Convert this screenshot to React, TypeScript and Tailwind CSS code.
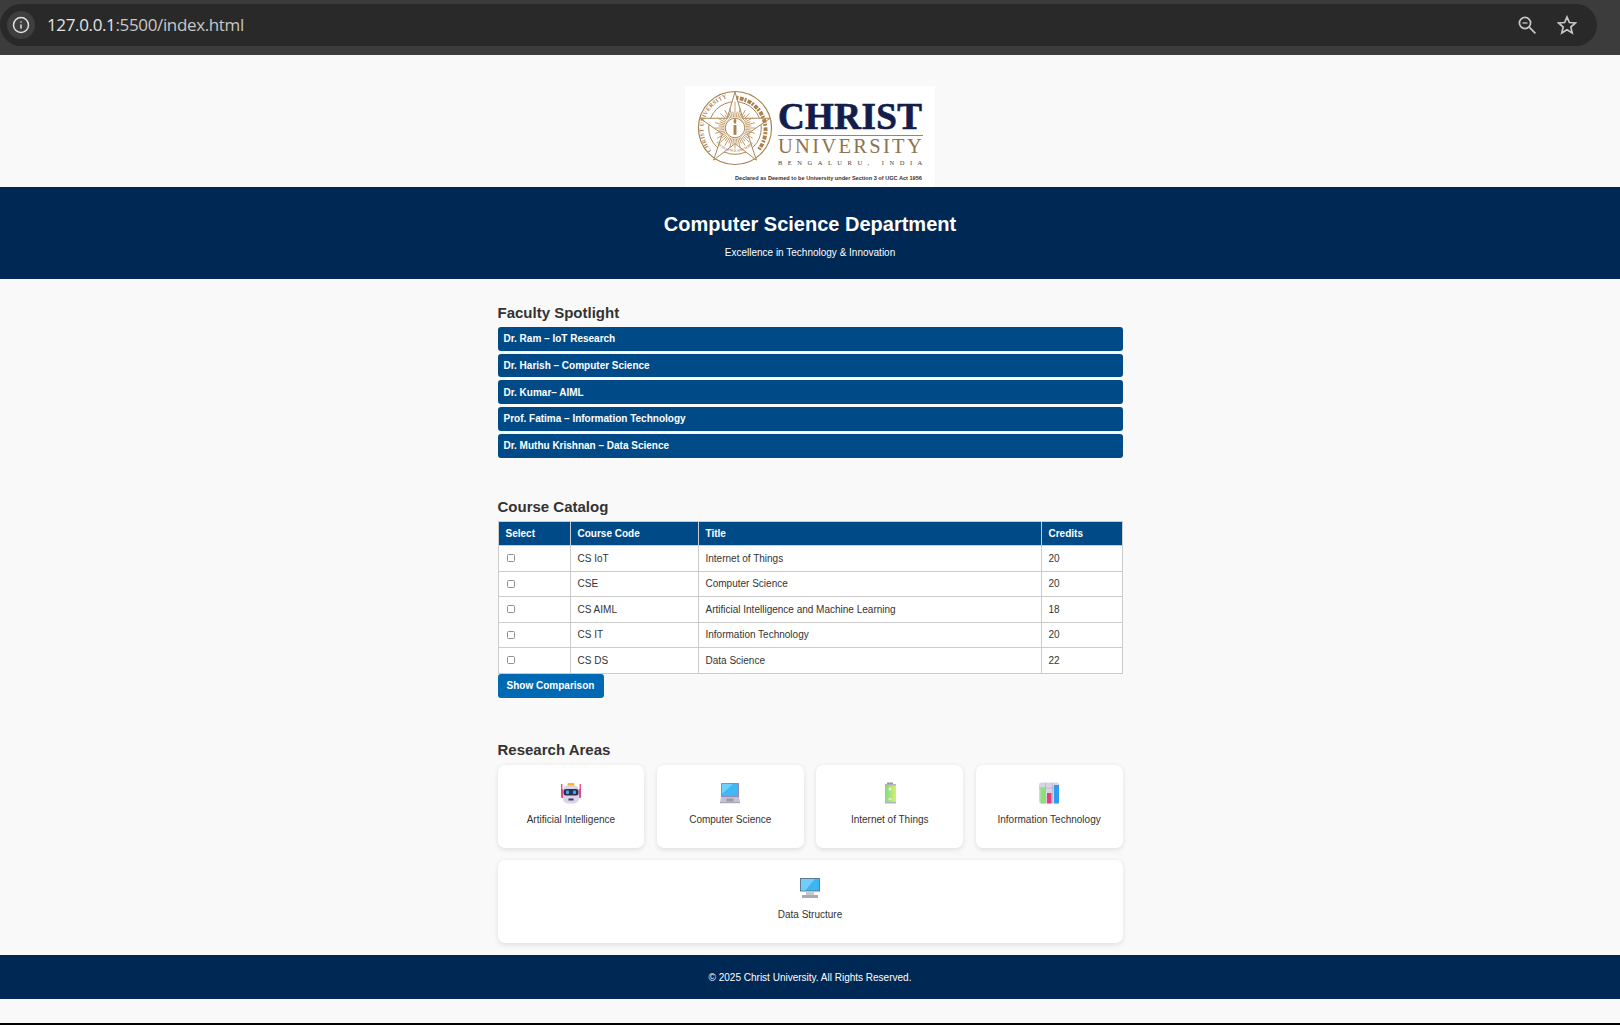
import { Info } from "lucide-react";

const FACULTY = [
    "Dr. Ram – IoT Research",
    "Dr. Harish – Computer Science",
    "Dr. Kumar– AIML",
    "Prof. Fatima – Information Technology",
    "Dr. Muthu Krishnan – Data Science",
];

const COURSES = [
    { code: "CS IoT", title: "Internet of Things", credits: 20 },
    { code: "CSE", title: "Computer Science", credits: 20 },
    { code: "CS AIML", title: "Artificial Intelligence and Machine Learning", credits: 18 },
    { code: "CS IT", title: "Information Technology", credits: 20 },
    { code: "CS DS", title: "Data Science", credits: 22 },
];

function RobotIcon() {
    return (
        <svg width="22" height="22" viewBox="0 0 22 22">
            <rect x="7.5" y="1" width="7" height="3" rx="1" fill="#f5b82e" />
            <rect x="1" y="2" width="1.4" height="9" fill="#ec4f86" />
            <rect x="19.6" y="2" width="1.4" height="9" fill="#ec4f86" />
            <rect x="1" y="7" width="3" height="9" rx="1" fill="#e8487f" />
            <rect x="18" y="7" width="3" height="9" rx="1" fill="#e8487f" />
            <rect x="3" y="3.5" width="16" height="18" rx="5" fill="#ded2ea" />
            <rect x="3.5" y="7" width="15" height="6.5" rx="2.5" fill="#2b2f56" />
            <rect x="6" y="8.5" width="3" height="3.5" rx="1" fill="#36b3f2" />
            <rect x="13" y="8.5" width="3" height="3.5" rx="1" fill="#36b3f2" />
            <rect x="8.5" y="16.5" width="5" height="2" fill="#3d3a57" />
        </svg>
    );
}

function LaptopIcon() {
    return (
        <svg width="22" height="22" viewBox="0 0 22 22">
            <rect x="2" y="1" width="18" height="14" rx="0.5" fill="#8f88b8" />
            <rect x="3" y="2" width="16" height="12" fill="#3fb8f5" />
            <path d="M3 2h11L3 12z" fill="#6fd0fa" />
            <path d="M2 15h18l1 5.5H1z" fill="#c6c1d2" />
            <rect x="7.5" y="16.5" width="7" height="3" fill="#9d98ab" />
            <rect x="1" y="20" width="20" height="1.2" fill="#a9a5b5" />
        </svg>
    );
}

function BatteryIcon() {
    return (
        <svg width="22" height="22" viewBox="0 0 22 22">
            <rect x="8" y="0.5" width="6" height="2" fill="#9c97a6" />
            <rect x="6" y="2" width="11" height="19.5" fill="#b5b0bd" />
            <defs>
                <linearGradient id="batteryFill" x1="0" x2="1" y1="0" y2="0">
                    <stop offset="0" stopColor="#7fdc7e" />
                    <stop offset="1" stopColor="#d6ee76" />
                </linearGradient>
            </defs>
            <rect x="6" y="3.5" width="11" height="16.5" fill="url(#batteryFill)" />
            <path d="M9.5 7h3M11 5.5v3M9.5 17h3" stroke="#fff" strokeWidth="1" />
        </svg>
    );
}

function ChartIcon() {
    return (
        <svg width="22" height="22" viewBox="0 0 22 22">
            <rect x="1" y="0.5" width="20" height="21" rx="2.5" fill="#d9d4e2" />
            <path d="M1 6h20M7.5 1v20M14.5 1v20" stroke="#b7b2c4" strokeWidth="0.8" />
            <rect x="2.5" y="5.5" width="5" height="16" fill="#8be07d" />
            <rect x="9" y="11" width="4.5" height="10.5" fill="#ec3a78" />
            <rect x="16" y="3" width="5" height="18.5" fill="#2f9bef" />
        </svg>
    );
}

function MonitorIcon() {
    return (
        <svg width="22" height="22" viewBox="0 0 22 22">
            <rect x="1" y="1" width="20" height="13.5" fill="#5c7a96" />
            <rect x="2" y="2" width="18" height="11.5" fill="#3fb4f2" />
            <path d="M2 2h14L6 13.5H2z" fill="#74cdf8" />
            <rect x="7" y="14.5" width="8" height="3.5" fill="#cac6d2" />
            <rect x="3" y="18" width="16" height="3" fill="#aca7ba" />
        </svg>
    );
}

function Seal() {
    const rays = Array.from({ length: 48 }, (_, i) => i * 7.5);
    return (
        <svg width="76" height="76" viewBox="0 0 78 78" className="shrink-0">
            <circle cx="39" cy="39" r="37.5" fill="none" stroke="#a9824f" strokeWidth="1.2" />
            <circle cx="39" cy="39" r="27" fill="none" stroke="#a9824f" strokeWidth="1" />
            <path id="sealArc" d="M15 62A33 33 0 0 1 39 7" fill="none" />
            <path id="sealArcBottom" d="M20 54A24 24 0 0 0 58 54" fill="none" />
            <polygon
                points="39,2 47,29 75,29 52,45 61,72 39,55 17,72 26,45 3,29 31,29"
                fill="#fff"
                stroke="#a9824f"
                strokeWidth="1"
            />
            <text fontFamily="'Liberation Serif', serif" fontSize="6" fontWeight="700" fill="#a9824f" letterSpacing="0.3">
                <textPath href="#sealArc">CHRIST UNIVERSITY</textPath>
            </text>
            <text fontFamily="'Liberation Serif', serif" fontSize="3.4" fontWeight="700" fill="#a9824f">
                <textPath href="#sealArcBottom">EXCELLENCE AND SERVICE</textPath>
            </text>
            <path
                d="M41 7A33 33 0 0 1 64 60"
                fill="none"
                stroke="#a9824f"
                strokeWidth="4"
                strokeDasharray="2 1.5 4 1"
                transform="translate(-0.5 1)"
            />
            {rays.map((deg) => (
                <line
                    key={deg}
                    x1="39"
                    y1="28"
                    x2="39"
                    y2={deg % 72 === 0 ? 12 : deg % 15 === 0 ? 18 : 22}
                    stroke="#bd9663"
                    strokeWidth="0.9"
                    transform={`rotate(${deg} 39 39)`}
                />
            ))}
            <circle cx="39" cy="39" r="10" fill="#fff" stroke="#a9824f" strokeWidth="1" />
            <rect x="37.5" y="36" width="3" height="10" fill="#a9824f" />
            <path d="M39 29c2 2 2 4 0 6c-2-2-2-4 0-6z" fill="#a9824f" />
        </svg>
    );
}

function Logo() {
    return (
        <div className="w-[250px] h-[101px] bg-white flex flex-col items-center">
            <div className="flex gap-[5px] pt-[4px] pl-[12px] h-[88px] w-full">
                <Seal />
                <div className="w-[145px] flex flex-col pt-[10px]">
                    <div className="font-['Liberation_Serif',serif] font-bold text-[#131d4c] text-[37px] leading-[34px] tracking-[0.4px] [-webkit-text-stroke:0.7px_#131d4c] border-b border-[#a9824f] pb-[1px] whitespace-nowrap">
                        CHRIST
                    </div>
                    <div className="font-['Liberation_Serif',serif] text-[#8e7350] text-[20.5px] leading-[21px] tracking-[2.3px] whitespace-nowrap">
                        UNIVERSITY
                    </div>
                    <div className="font-['Liberation_Serif',serif] text-[#444] text-[6.5px] leading-[12px] tracking-[5.5px] whitespace-nowrap">
                        BENGALURU, INDIA
                    </div>
                </div>
            </div>
            <div className="text-[5.6px] leading-[8px] font-bold text-[#333] w-full pl-[50px] whitespace-nowrap">
                Declared as Deemed to be University under Section 3 of UGC Act 1956
            </div>
        </div>
    );
}

function BrowserBar() {
    return (
        <div className="h-[55px] bg-[#3c3c3c] pt-[4px] pr-[23px]">
            <div className="h-[42px] bg-[#292929] rounded-r-[21px] rounded-l-[21px] flex items-center pl-[7px] pr-[20px]">
                <div className="w-[28px] h-[28px] rounded-full bg-[#3e3e3e] flex items-center justify-center">
                    <Info size={18} strokeWidth={2} className="text-[#e3e3e3]" />
                </div>
                <div className="ml-[12px] text-[17px] tracking-[-0.36px] font-['Open_Sans',sans-serif] text-[#c7c7c7]">
                    <span className="text-[#e3e3e3]">127.0.0.1</span>:5500/index.html
                </div>
                <div className="ml-auto flex items-center gap-[20px]">
                    <svg width="20" height="20" viewBox="0 0 20 20" fill="none" stroke="#c7c7c7" strokeWidth="1.7">
                        <circle cx="8" cy="8" r="5.6" />
                        <path d="M12.2 12.2l6.2 6.2" />
                        <path d="M5.5 8h5" strokeWidth="1.3" />
                    </svg>
                    <svg width="20" height="20" viewBox="0 0 20 20" fill="none" stroke="#c7c7c7" strokeWidth="1.7" strokeLinejoin="miter">
                        <path d="M10 2l2.4 5.5 6 .5-4.6 4 1.4 5.9L10 14.8l-5.2 3.1 1.4-5.9-4.6-4 6-.5z" />
                    </svg>
                </div>
            </div>
        </div>
    );
}

function AreaCard({ icon, label, wide }: { icon: React.ReactNode; label: string; wide?: boolean }) {
    return (
        <div
            className={`h-[83px] bg-white rounded-[7px] shadow-[0_1.5px_5px_rgba(0,0,0,0.1)] flex flex-col items-center pt-[17px] ${
                wide ? "col-span-4" : ""
            }`}
        >
            {icon}
            <p className="mt-[9px] text-[10px] leading-[14px] text-[#333]">{label}</p>
        </div>
    );
}

export default function App() {
    return (
        <div className="h-[1025px] overflow-hidden flex flex-col bg-[#f9f9f9] text-[#333] font-['Liberation_Sans',Arial,sans-serif]">
            <BrowserBar />

            <div className="flex justify-center pt-[31px]">
                <Logo />
            </div>

            <header className="h-[92px] bg-[#002855] text-white text-center pt-[23px]">
                <h1 className="text-[20px] leading-[28px] font-bold">Computer Science Department</h1>
                <p className="text-[10px] leading-[14px] mt-[8px]">Excellence in Technology &amp; Innovation</p>
            </header>

            <main className="w-[625px] mx-auto pt-[25px]">
                <section>
                    <h2 className="text-[15px] leading-[18px] font-bold mb-[5px]">Faculty Spotlight</h2>
                    <ul className="flex flex-col gap-[2.9px]">
                        {FACULTY.map((name) => (
                            <li
                                key={name}
                                className="h-[23.8px] flex items-center px-[6px] bg-[#004b87] text-white text-[10px] font-bold rounded-[3px]"
                            >
                                {name}
                            </li>
                        ))}
                    </ul>
                </section>

                <section className="mt-[40px]">
                    <h2 className="text-[15px] leading-[18px] font-bold mb-[5px]">Course Catalog</h2>
                    <table className="w-full table-fixed border-collapse text-[10px] bg-white">
                        <colgroup>
                            <col className="w-[72px]" />
                            <col className="w-[128px]" />
                            <col className="w-[343px]" />
                            <col />
                        </colgroup>
                        <thead>
                            <tr className="h-[24.6px] bg-[#004b87] text-white text-left">
                                {["Select", "Course Code", "Title", "Credits"].map((h) => (
                                    <th key={h} className="border border-[#ccc] px-[7px] font-bold">
                                        {h}
                                    </th>
                                ))}
                            </tr>
                        </thead>
                        <tbody>
                            {COURSES.map((c) => (
                                <tr key={c.code} className="h-[25.5px]">
                                    <td className="border border-[#ccc] px-[8px]">
                                        <div className="w-[8px] h-[8px] border border-[#8f8f8f] rounded-[1.5px] bg-white" />
                                    </td>
                                    <td className="border border-[#ccc] px-[7px]">{c.code}</td>
                                    <td className="border border-[#ccc] px-[7px]">{c.title}</td>
                                    <td className="border border-[#ccc] px-[7px]">{c.credits}</td>
                                </tr>
                            ))}
                        </tbody>
                    </table>
                    <button className="block w-[106px] h-[24px] bg-[#0069b4] text-white text-[10px] font-bold rounded-[3px]">
                        Show Comparison
                    </button>
                </section>

                <section className="mt-[43px]">
                    <h2 className="text-[15px] leading-[18px] font-bold mb-[6px]">Research Areas</h2>
                    <div className="grid grid-cols-4 gap-[12.67px]">
                        <AreaCard icon={<RobotIcon />} label="Artificial Intelligence" />
                        <AreaCard icon={<LaptopIcon />} label="Computer Science" />
                        <AreaCard icon={<BatteryIcon />} label="Internet of Things" />
                        <AreaCard icon={<ChartIcon />} label="Information Technology" />
                        <AreaCard icon={<MonitorIcon />} label="Data Structure" wide />
                    </div>
                </section>
            </main>

            <footer className="mt-[12px] h-[44px] bg-[#002855] text-white text-[10px] flex items-center justify-center">
                © 2025 Christ University. All Rights Reserved.
            </footer>

            <div className="mt-auto h-[2px] bg-black" />
        </div>
    );
}
